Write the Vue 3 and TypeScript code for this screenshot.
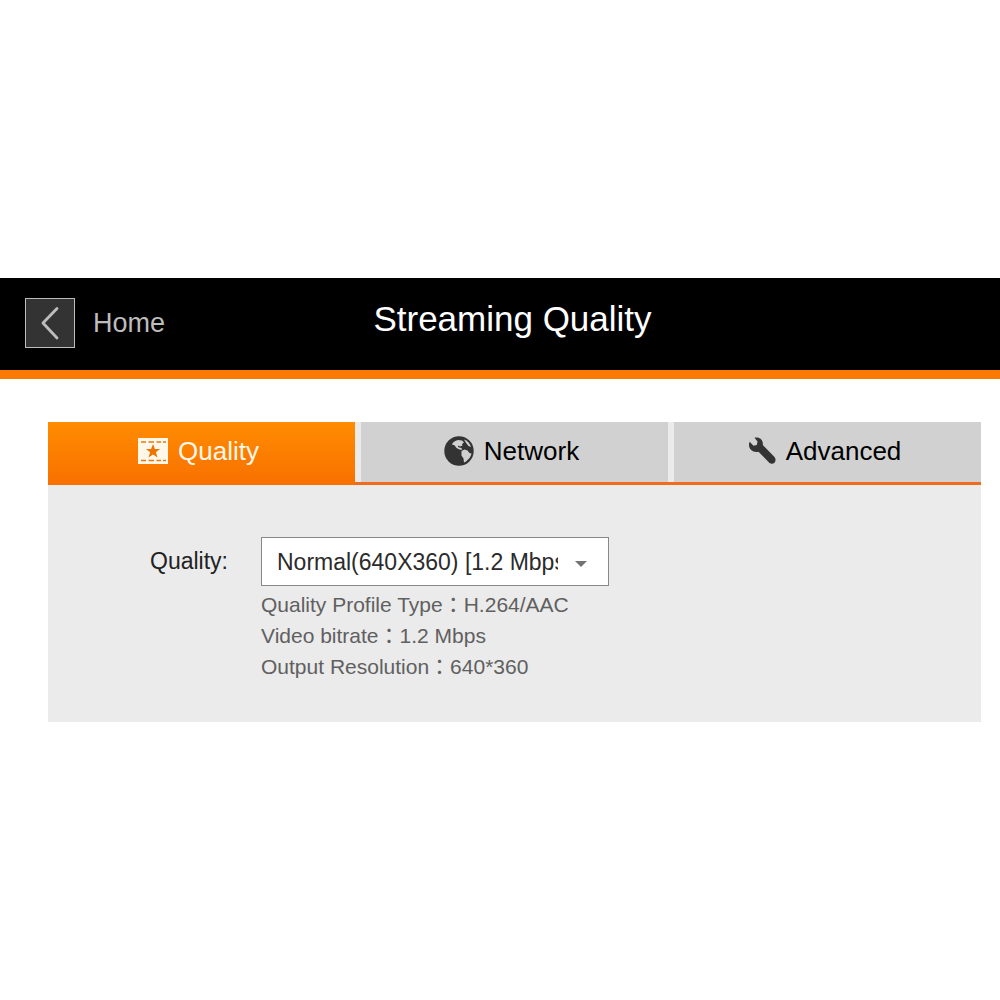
<script setup lang="ts">
import { ref } from 'vue'

interface Profile {
  id: string
  label: string
  details: { name: string; value: string }[]
}

const tabs = ['Quality', 'Network', 'Advanced'] as const
const activeTab = ref<(typeof tabs)[number]>('Quality')

const profiles: Profile[] = [
  {
    id: 'normal',
    label: 'Normal(640X360) [1.2 Mbps]',
    details: [
      { name: 'Quality Profile Type', value: 'H.264/AAC' },
      { name: 'Video bitrate', value: '1.2 Mbps' },
      { name: 'Output Resolution', value: '640*360' },
    ],
  },
]
const selected = ref('normal')
</script>

<template>
  <div class="page">
    <header class="header">
      <a class="back" href="#">
        <span class="back-box">
          <svg width="48" height="48" viewBox="0 0 48 48" aria-hidden="true">
            <path d="M31 9.500 17 24 31 39" fill="none" stroke="#bdbdbd" stroke-width="2.800" stroke-linecap="round" stroke-linejoin="round" />
          </svg>
        </span>
        <span>Home</span>
      </a>
      <h1 class="title">Streaming Quality</h1>
    </header>

    <main class="content">
      <nav class="tabs">
        <button
          v-for="tab in tabs"
          :key="tab"
          type="button"
          class="tab"
          :class="{ active: tab === activeTab }"
          @click="activeTab = tab"
        >
          <svg v-if="tab === 'Quality'" width="30" height="28" viewBox="0 0 30 28" aria-hidden="true">
            <path d="M0 1H30V27H0Z" fill="#fff8ea" />
            <path d="M3 5H8M10.500 5H16M18.500 5H23M25 5H28M3 23.500H8M10.500 23.500H16M18.500 23.500H23M25 23.500H28" stroke="#e8780c" stroke-width="1.400" />
            <path d="M15 7 16.900 12H22L17.900 15.200 19.500 20.600 15 17.400 10.500 20.600 12.100 15.200 8 12H13.100Z" fill="#ee7400" />
          </svg>
          <svg v-else-if="tab === 'Network'" width="30" height="30" viewBox="0 0 30 30" aria-hidden="true">
            <circle cx="15" cy="15" r="14.700" fill="#333" />
            <path d="M8 8.500C8.500 6.500 11 4.500 14 4L18 4.500 20 6.500 18 8 18.500 9.500 16 10.500 14.500 9.500 13.800 10.500 15 11.500 17.500 12 18 14 15.500 13.500 12.500 12 10.500 9.300Z" fill="#d0d0d0" />
            <path d="M20 3.500C23 4.500 26 7.500 27 11L24.500 10 22.500 7.500Z" fill="#d0d0d0" />
            <path d="M17.500 15 20.500 13.500 23.500 14.500 25.500 17 27.500 17.500C27 20.500 24.500 23.500 22 25.500L20 26.500 19.500 22.500 17.500 19.500Z" fill="#d0d0d0" />
          </svg>
          <svg v-else width="28" height="28" viewBox="0 0 28 28" aria-hidden="true">
            <path d="M6.500 .700C11.500 -.500 15.500 3 14.800 8L26.500 20C29.500 24 25.500 28.500 21.500 26L10.500 14.700C5.500 16 .500 12.500 1 7L1.700 4.800 5.500 8.800 8.800 8 9.500 4.500Z" fill="#333" />
          </svg>
          <span>{{ tab }}</span>
        </button>
      </nav>

      <section class="panel">
        <label class="label" for="quality">Quality:</label>
        <div class="field">
          <div class="select-wrap">
            <select id="quality" v-model="selected" class="select">
              <option v-for="p in profiles" :key="p.id" :value="p.id">{{ p.label }}</option>
            </select>
            <svg class="caret" width="12" height="6" viewBox="0 0 12 6" aria-hidden="true">
              <path d="M0 0H12L6 6Z" fill="#737373" />
            </svg>
          </div>
          <ul class="details" lang="zh-TW">
            <li v-for="d in profiles[0].details" :key="d.name">{{ d.name }}：{{ d.value }}</li>
          </ul>
        </div>
      </section>
    </main>
  </div>
</template>

<style>
body {
  margin: 0;
  background: #fff;
}
</style>

<style scoped>
.page {
  display: flex;
  flex-direction: column;
  justify-content: center;
  min-height: 100vh;
  font-family: "Liberation Sans", "Noto Sans CJK TC", sans-serif;
}

.header {
  display: grid;
  grid-template-columns: 1fr auto 1fr;
  align-items: center;
  height: 90px;
  padding: 0 0 2px 25px;
  background: #000;
  border-bottom: 9px solid #f97b04;
}

.back {
  display: flex;
  align-items: center;
  gap: 18px;
  color: #bdbdbd;
  font-size: 27px;
  line-height: 32px;
  text-decoration: none;
}

.back-box {
  display: flex;
  border: 1px solid #bdbdbd;
  background: #333;
}

.title {
  margin: 0;
  padding-bottom: 8px;
  color: #fff;
  font-size: 35px;
  font-weight: 400;
  line-height: 40px;
}

.content {
  margin: 43px 19px 0 48px;
  background: #ebebeb;
}

.tabs {
  display: grid;
  grid-template-columns: repeat(3, 1fr);
  column-gap: 6px;
  border-bottom: 3px solid #f16b1c;
}

.tab {
  display: flex;
  align-items: center;
  justify-content: center;
  gap: 10px;
  height: 60px;
  padding: 0 6px 2px 0;
  border: 0;
  background: #d1d1d1;
  color: #000;
  font-family: inherit;
  font-size: 26px;
  line-height: 30px;
}

.tab.active {
  height: 63px;
  margin-bottom: -3px;
  padding-bottom: 5px;
  background: linear-gradient(#ff8c00, #f87000);
  color: #fff8ea;
}

.panel {
  display: flex;
  box-sizing: border-box;
  min-height: 237px;
  padding: 52px 0 40px 102px;
}

.label {
  width: 111px;
  color: #222;
  font-size: 23px;
  line-height: 48px;
}

.select-wrap {
  position: relative;
  width: 348px;
}

.select {
  display: block;
  box-sizing: border-box;
  width: 100%;
  height: 49px;
  padding: 0 50px 0 15px;
  border: 1px solid #888;
  border-radius: 0;
  background: #fff;
  color: #2b2b2b;
  font-family: inherit;
  font-size: 23px;
  appearance: none;
}

.caret {
  position: absolute;
  top: 24px;
  right: 22px;
  pointer-events: none;
}

.details {
  margin: 3px 0 0;
  padding: 0;
  color: #606060;
  font-size: 21px;
  line-height: 31px;
  list-style: none;
}
</style>
